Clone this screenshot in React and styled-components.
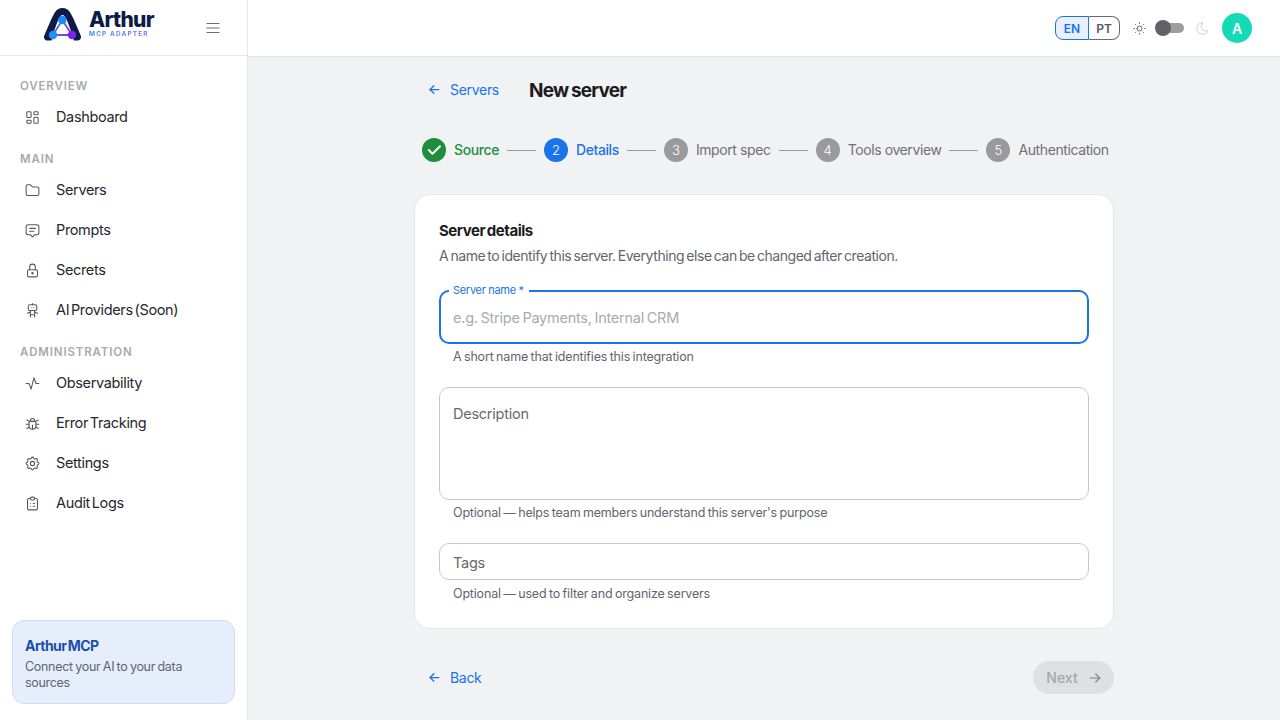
import React from "react";
import styled, { createGlobalStyle } from "styled-components";
import {
    TbLayoutDashboard,
    TbFolder,
    TbMessage2,
    TbLock,
    TbRobot,
    TbActivity,
    TbBug,
    TbSettings,
    TbClipboardList,
    TbMenu2,
    TbSun,
    TbMoon,
    TbArrowLeft,
    TbArrowRight,
    TbCheck,
} from "react-icons/tb";

const FONT = `Inter, "Noto Sans", "Liberation Sans", sans-serif`;

const GlobalStyle = createGlobalStyle`
    html, body {
        margin: 0;
        padding: 0;
        height: 100%;
        background: #f1f2f4;
        font-family: ${FONT};
    }
    * {
        box-sizing: border-box;
    }
`;

const NAV = [
    {
        title: "OVERVIEW",
        items: [{ label: "Dashboard", icon: TbLayoutDashboard }],
    },
    {
        title: "MAIN",
        items: [
            { label: "Servers", icon: TbFolder },
            { label: "Prompts", icon: TbMessage2 },
            { label: "Secrets", icon: TbLock },
            { label: "AI Providers (Soon)", icon: TbRobot },
        ],
    },
    {
        title: "ADMINISTRATION",
        items: [
            { label: "Observability", icon: TbActivity },
            { label: "Error Tracking", icon: TbBug },
            { label: "Settings", icon: TbSettings },
            { label: "Audit Logs", icon: TbClipboardList },
        ],
    },
];

const STEPS = [
    { label: "Source", state: "done" },
    { label: "Details", state: "active" },
    { label: "Import spec", state: "todo" },
    { label: "Tools overview", state: "todo" },
    { label: "Authentication", state: "todo" },
];

const stepColor = { done: "#1e8e3e", active: "#1a73e8", todo: "#9a9a9c" };
const stepText = { done: "#1e8e3e", active: "#1a73e8", todo: "#6f7074" };

const Logo = () => (
    <LogoWrap>
        <svg width="40" height="34" viewBox="0 0 40 34">
            <defs>
                <linearGradient id="tri" x1="0" y1="0" x2="1" y2="0.6">
                    <stop offset="0" stopColor="#1e90ff" />
                    <stop offset="1" stopColor="#7c3aed" />
                </linearGradient>
            </defs>
            <path
                d="M1.5 28C4.5 21 8 12 11.5 6 13.5 2.5 16 1 19.5 1s6 1.500 8 5c3.500 6 7 15 10 22 1.500 3.500-.5 5.500-3.500 5.500H5C2 33.500 0 31.500 1.500 28z"
                fill="#0e1a47"
            />
            <path
                d="M8.5 34C10.500 26 12.500 19 15 13.500 16.500 10 18 8 19.500 8s3 2 4.500 5.500C26.500 19 28.500 26 31 34z"
                fill="#fff"
            />
            <path d="M19.3 13L10 28h19z" fill="none" stroke="url(#tri)" strokeWidth="1.8" />
            <circle cx="19.3" cy="13" r="4.2" fill="#1e88f5" />
            <circle cx="10" cy="28" r="4.2" fill="#1e90ff" />
            <circle cx="29" cy="28" r="4.2" fill="#7c22ee" />
        </svg>
        <LogoText>
            <LogoName>Arthur</LogoName>
            <LogoTag>MCP ADAPTER</LogoTag>
        </LogoText>
    </LogoWrap>
);

const Sidebar = () => (
    <Side>
        <SideHeader>
            <Logo />
            <MenuButton>
                <TbMenu2 size={18} strokeWidth={1.6} />
            </MenuButton>
        </SideHeader>
        <Nav>
            {NAV.map((section) => (
                <section key={section.title}>
                    <SectionTitle>{section.title}</SectionTitle>
                    {section.items.map((item) => (
                        <NavItem key={item.label}>
                            <item.icon size={17} strokeWidth={1.5} color="#55585e" />
                            <NavLabel>{item.label}</NavLabel>
                        </NavItem>
                    ))}
                </section>
            ))}
        </Nav>
        <Promo>
            <PromoTitle>Arthur MCP</PromoTitle>
            <PromoText>Connect your AI to your data sources</PromoText>
        </Promo>
    </Side>
);

const Stepper = () => (
    <Steps>
        {STEPS.map((step, i) => (
            <React.Fragment key={step.label}>
                {i > 0 && <StepLine />}
                <StepCircle $state={step.state}>
                    {step.state === "done" ? (
                        <TbCheck size={18} strokeWidth={2.6} />
                    ) : (
                        i + 1
                    )}
                </StepCircle>
                <StepLabel $state={step.state}>{step.label}</StepLabel>
            </React.Fragment>
        ))}
    </Steps>
);

export default function App() {
    return (
        <Shell>
            <GlobalStyle />
            <Sidebar />
            <Main>
                <TopBar>
                    <LangGroup>
                        <LangButton $active>EN</LangButton>
                        <LangButton>PT</LangButton>
                    </LangGroup>
                    <TbSun size={15} strokeWidth={1.5} color="#55585e" />
                    <Toggle>
                        <ToggleThumb />
                    </Toggle>
                    <TbMoon size={15} strokeWidth={1.5} color="#c9cacc" />
                    <Avatar>A</Avatar>
                </TopBar>
                <Content>
                    <PageHead>
                        <BackLink>
                            <TbArrowLeft size={15} strokeWidth={2} />
                            Servers
                        </BackLink>
                        <PageTitle>New server</PageTitle>
                    </PageHead>
                    <Stepper />
                    <Card>
                        <CardTitle>Server details</CardTitle>
                        <CardText>
                            A name to identify this server. Everything else can be changed
                            after creation.
                        </CardText>
                        <FocusField>
                            <FloatLabel>Server name *</FloatLabel>
                            <TextInput placeholder="e.g. Stripe Payments, Internal CRM" />
                        </FocusField>
                        <Helper>A short name that identifies this integration</Helper>
                        <AreaField placeholder="Description" />
                        <Helper>Optional — helps team members understand this server's purpose</Helper>
                        <TagsField placeholder="Tags" />
                        <Helper $tight>Optional — used to filter and organize servers</Helper>
                    </Card>
                    <Footer>
                        <BackLink>
                            <TbArrowLeft size={15} strokeWidth={2} />
                            Back
                        </BackLink>
                        <NextButton disabled>
                            Next
                            <TbArrowRight size={16} strokeWidth={1.6} />
                        </NextButton>
                    </Footer>
                </Content>
            </Main>
        </Shell>
    );
}

const Shell = styled.div`
    display: flex;
    width: 1280px;
    height: 720px;
    overflow: hidden;
`;

const Side = styled.aside`
    width: 248px;
    flex-shrink: 0;
    display: flex;
    flex-direction: column;
    background: #fff;
    border-right: 1px solid #e6e7e9;
`;

const SideHeader = styled.div`
    height: 56px;
    display: flex;
    align-items: center;
    justify-content: space-between;
    padding: 0 25px 0 43px;
    border-bottom: 1px solid #e6e7e9;
`;

const LogoWrap = styled.div`
    display: flex;
    align-items: center;
    gap: 6px;
    margin-top: -8px;
`;

const LogoText = styled.div`
    display: flex;
    flex-direction: column;
    gap: 2px;
    margin-top: 2px;
`;

const LogoName = styled.span`
    font-size: 21px;
    line-height: 18px;
    font-weight: 800;
    color: #0e1a47;
    letter-spacing: -0.7px;
`;

const LogoTag = styled.span`
    font-size: 6.5px;
    line-height: 7px;
    font-weight: 700;
    letter-spacing: 1.1px;
    background: linear-gradient(90deg, #2f8df5, #8b6cf0);
    -webkit-background-clip: text;
    background-clip: text;
    color: transparent;
`;

const MenuButton = styled.div`
    display: flex;
    color: #6b6e73;
`;

const Nav = styled.nav`
    flex: 1;
    padding-top: 8px;
`;

const SectionTitle = styled.div`
    height: 22px;
    margin-top: 11px;
    padding-left: 20px;
    display: flex;
    align-items: center;
    font-size: 11.5px;
    font-weight: 600;
    letter-spacing: 0.85px;
    color: #a8a9ab;
`;

const NavItem = styled.div`
    height: 40px;
    display: flex;
    align-items: center;
    gap: 15px;
    padding-left: 24px;
    font-size: 14.5px;
    font-weight: 400;
    letter-spacing: -0.35px;
    word-spacing: -2px;
    color: #25282e;
`;

const NavLabel = styled.span`
    margin-top: -1px;
`;

const Promo = styled.div`
    margin: 0 12px 16px;
    height: 84px;
    padding: 16px 12px 0;
    background: #e6eefb;
    border: 1px solid #cfdcf8;
    border-radius: 12px;
`;

const PromoTitle = styled.div`
    font-size: 14px;
    line-height: 18px;
    font-weight: 700;
    letter-spacing: -0.55px;
    word-spacing: -1.5px;
    color: #1a4fa8;
`;

const PromoText = styled.div`
    margin-top: 4px;
    font-size: 12.5px;
    line-height: 16px;
    letter-spacing: -0.3px;
    word-spacing: -0.8px;
    color: #62656b;
`;

const Main = styled.main`
    flex: 1;
    display: flex;
    flex-direction: column;
    min-width: 0;
`;

const TopBar = styled.header`
    height: 57px;
    flex-shrink: 0;
    display: flex;
    align-items: center;
    justify-content: flex-end;
    gap: 12px;
    padding-right: 28px;
    background: #fff;
    border-bottom: 1px solid #e6e7e9;
`;

const LangGroup = styled.div`
    display: flex;
`;

const LangButton = styled.div`
    height: 24px;
    width: ${(p) => (p.$active ? "34px" : "31px")};
    display: flex;
    align-items: center;
    justify-content: center;
    font-size: 12px;
    font-weight: 600;
    color: ${(p) => (p.$active ? "#1a73e8" : "#55585e")};
    background: ${(p) => (p.$active ? "#e8f0fe" : "transparent")};
    border: 1px solid ${(p) => (p.$active ? "#1a73e8" : "#66696e")};
    border-left-width: ${(p) => (p.$active ? "1px" : "0")};
    border-radius: ${(p) => (p.$active ? "8px 0 0 8px" : "0 8px 8px 0")};
`;

const Toggle = styled.div`
    position: relative;
    width: 26px;
    height: 10px;
    margin: 0 -1px;
    border-radius: 5px;
    background: #9e9e9e;
`;

const ToggleThumb = styled.span`
    position: absolute;
    left: -3px;
    top: -3px;
    width: 16px;
    height: 16px;
    border-radius: 50%;
    background: #5f6368;
`;

const Avatar = styled.div`
    width: 30px;
    height: 30px;
    display: flex;
    align-items: center;
    justify-content: center;
    border-radius: 50%;
    background: #14dab6;
    color: #fff;
    font-size: 14px;
    font-weight: 600;
`;

const Content = styled.div`
    width: 700px;
    margin: 0 auto;
    padding-top: 16px;
`;

const PageHead = styled.div`
    height: 34px;
    display: flex;
    align-items: center;
    gap: 30px;
    padding-left: 13px;
`;

const BackLink = styled.div`
    display: flex;
    align-items: center;
    gap: 8px;
    font-size: 14px;
    letter-spacing: -0.3px;
    padding-bottom: 1px;
    color: #1a73e8;
`;

const PageTitle = styled.h1`
    margin: 0;
    font-size: 19px;
    font-weight: 700;
    letter-spacing: -0.8px;
    word-spacing: -1px;
    color: #1c1c1e;
`;

const Steps = styled.div`
    margin-top: 31px;
    height: 24px;
    display: flex;
    align-items: center;
    gap: 8px;
    padding-left: 8px;
`;

const StepCircle = styled.div`
    width: 24px;
    height: 24px;
    flex-shrink: 0;
    display: flex;
    align-items: center;
    justify-content: center;
    border-radius: 50%;
    background: ${(p) => stepColor[p.$state]};
    color: #fff;
    font-size: 13px;
    font-weight: 300;
`;

const StepLabel = styled.span`
    font-size: 14px;
    font-weight: ${(p) => (p.$state === "todo" ? 400 : 500)};
    letter-spacing: -0.4px;
    margin-top: -1px;
    color: ${(p) => stepText[p.$state]};
    white-space: nowrap;
`;

const StepLine = styled.span`
    width: 29px;
    flex-shrink: 0;
    height: 1px;
    background: #9b9c9f;
`;

const Card = styled.div`
    margin-top: 32px;
    height: 435px;
    padding: 24px;
    background: #fff;
    border: 1px solid #e6e7e9;
    border-radius: 16px;
`;

const CardTitle = styled.div`
    font-size: 15px;
    line-height: 24px;
    font-weight: 700;
    letter-spacing: -0.45px;
    word-spacing: -1.5px;
    color: #1c1c1e;
`;

const CardText = styled.div`
    margin-top: 1px;
    font-size: 14px;
    line-height: 24px;
    letter-spacing: -0.45px;
    word-spacing: -1.3px;
    color: #62656b;
`;

const FocusField = styled.div`
    position: relative;
    margin-top: 22px;
    height: 54px;
    border: 2px solid #1a73e8;
    border-radius: 10px;
`;

const FloatLabel = styled.label`
    position: absolute;
    left: 8px;
    top: -9px;
    padding: 0 5px 0 4px;
    font-size: 11px;
    line-height: 14px;
    letter-spacing: -0.3px;
    color: #1a73e8;
    background: #fff;
`;

const TextInput = styled.input`
    width: 100%;
    height: 100%;
    padding: 0 12px;
    border: 0;
    outline: 0;
    background: transparent;
    font: 400 14.5px ${FONT};
    letter-spacing: -0.25px;
    word-spacing: -1px;
    &::placeholder {
        color: #a9abae;
        opacity: 1;
    }
`;

const Helper = styled.div`
    height: 26px;
    padding: ${(p) => (p.$tight ? "5px" : "4px")} 14px 0;
    font-size: 12.5px;
    line-height: 18px;
    letter-spacing: -0.18px;
    word-spacing: -0.8px;
    color: #62656b;
`;

const fieldStyle = `
    display: block;
    width: 100%;
    padding: 0 13px;
    border: 1px solid #c7c8ca;
    border-radius: 10px;
    outline: 0;
    resize: none;
    background: #fff;
    font: 400 14.5px ${FONT};
    letter-spacing: -0.25px;
    &::placeholder {
        color: #66696e;
        opacity: 1;
    }
`;

const AreaField = styled.textarea`
    ${fieldStyle}
    margin-top: 17px;
    height: 113px;
    padding-top: 17px;
    line-height: 18px;
`;

const TagsField = styled.input`
    ${fieldStyle}
    margin-top: 17px;
    height: 37px;
    padding-top: 2px;
`;

const Footer = styled.div`
    margin-top: 32px;
    height: 33px;
    display: flex;
    align-items: center;
    justify-content: space-between;
    padding-left: 13px;
`;

const NextButton = styled.button`
    width: 81px;
    height: 33px;
    display: flex;
    align-items: center;
    justify-content: center;
    gap: 9px;
    padding-left: 8px;
    border: 0;
    border-radius: 17px;
    background: #dfe0e1;
    color: #a6a7a9;
    font: 500 14px ${FONT};
    svg {
        color: #7f8083;
    }
`;
